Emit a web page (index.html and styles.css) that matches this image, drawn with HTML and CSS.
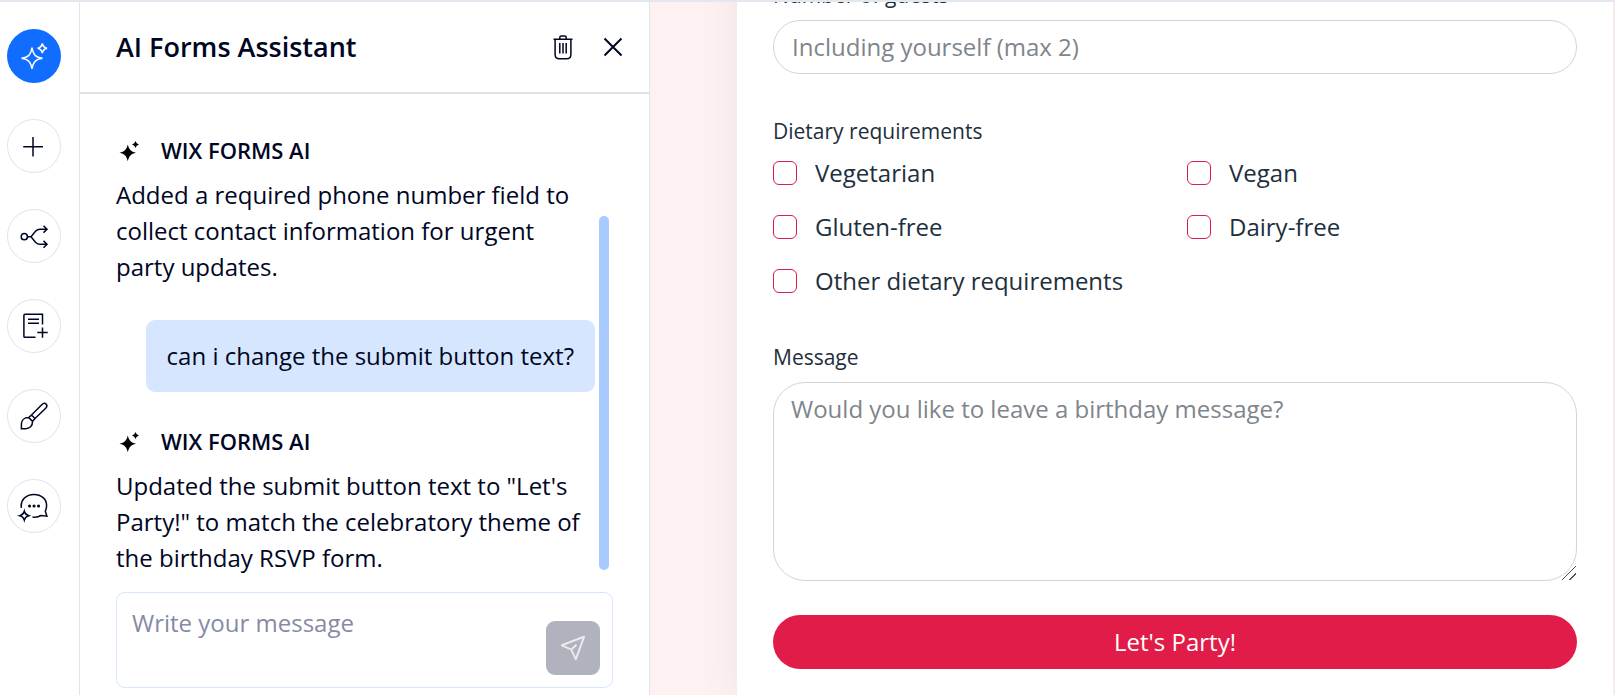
FILE: index.html
```html
<!DOCTYPE html>
<html lang="en">
    <head>
        <meta charset="UTF-8">
        <meta name="viewport" content="width=device-width, initial-scale=1.0"/>
        <title>AI Forms Assistant</title>
        <link rel="stylesheet" href="styles.css">
    </head>
    <body>
        <div class="editor">
            <nav class="rail" aria-label="Form tools">
                <button class="rail-button active" type="button" aria-label="AI assistant">
                    <svg viewBox="0 0 54 54">
                        <path d="M25 18.5C26 25.5 28.500 28.300 35.500 29.300C28.500 30.300 26 33 25 40C24 33 21.500 30.300 14.500 29.300C21.500 28.300 24 25.500 25 18.500Z"/>
                        <path d="M35.300 14.500C35.900 17.400 37.200 18.700 40 19.300C37.200 19.900 35.900 21.200 35.300 24C34.700 21.200 33.400 19.900 30.600 19.300C33.400 18.700 34.700 17.400 35.300 14.500Z"/>
                    </svg>
                </button>
                <button class="rail-button" type="button" aria-label="Add field">
                    <svg viewBox="0 0 54 54"><path d="M26 18V37.500M16.200 27.700H36"/></svg>
                </button>
                <button class="rail-button" type="button" aria-label="Rules">
                    <svg viewBox="0 0 54 54">
                        <circle cx="17.300" cy="27.700" r="3.100"/>
                        <path d="M20.500 27.700H24L28.500 22.300Q30.500 20.200 33 20.200H39.500M24 27.700L28.500 33.200Q30.500 35.300 33 35.300H39.500M36.500 16.800L40 20.200L36.500 23.600M36.500 31.900L40 35.300L36.500 38.700"/>
                    </svg>
                </button>
                <button class="rail-button" type="button" aria-label="Form pages">
                    <svg viewBox="0 0 54 54">
                        <path d="M35.500 25.500V15.300H18Q16.900 15.300 16.900 16.400V37.200Q16.900 38.300 18 38.300H28.500M21 20.300H32M21 24.300H32M35.500 28.500V38.700M30.300 33.500H40.700"/>
                    </svg>
                </button>
                <button class="rail-button" type="button" aria-label="Design">
                    <svg viewBox="0 0 54 54">
                        <path d="M24.500 26L35 15.500C36.500 14 38.200 14.100 39.100 15.100C40.200 16.200 40.100 17.800 38.700 19.200L28 29.500M24.500 26L28 29.500L25.500 32.300L21.700 28.600ZM21.700 28.600C17 28.500 14.500 31.500 14.400 35V39.700H18.500C22.500 39.700 25.800 37 25.500 32.300"/>
                    </svg>
                </button>
                <button class="rail-button" type="button" aria-label="Feedback">
                    <svg viewBox="0 0 54 54">
                        <path d="M14.300 28.800C13.300 20.500 19.300 15.400 27 15.400C34.500 15.400 39.600 20.300 39.600 26.500C39.600 29 38.800 31 38.300 32.200L39.900 37.200L34 36.500C31 38.300 28.300 38.500 25.500 38"/>
                        <path d="M17.300 32.300C18 35 19 36 21.700 36.700C19 37.400 18 38.400 17.300 41.100C16.600 38.400 15.600 37.400 12.900 36.700C15.600 36 16.600 35 17.300 32.300Z"/>
                        <path class="dots" d="M22.500 27H22.600M27 27H27.100M31.500 27H31.600"/>
                    </svg>
                </button>
            </nav>

            <section class="assistant">
                <header class="assistant-header">
                    <h1>AI Forms Assistant</h1>
                    <button class="icon-button" type="button" aria-label="Clear conversation">
                        <svg viewBox="0 0 24 30">
                            <path d="M2.500 7.200H21.500M8.800 7V5.500Q8.800 4 10.300 4H13.700Q15.200 4 15.200 5.500V7M4.100 7.500V22.500Q4.100 26.800 8.400 26.800H15.600Q19.900 26.800 19.900 22.500V7.500M8.800 11V21.500M12 11V21.500M15.200 11V21.500"/>
                        </svg>
                    </button>
                    <button class="icon-button close" type="button" aria-label="Close">
                        <svg viewBox="0 0 24 30"><path d="M3.500 6.500L20.500 23.500M20.500 6.500L3.500 23.500"/></svg>
                    </button>
                </header>

                <div class="chat">
                    <article class="reply">
                        <h2 class="reply-name">
                            <svg class="sparkle" viewBox="0 0 24 24">
                                <path d="M11.800 5.500C13 10.500 15 12.600 20 13.800C15 15 13 17.100 11.800 22.300C10.600 17.100 8.600 15 3.500 13.800C8.600 12.600 10.600 10.500 11.800 5.500ZM19.500 2L20.700 4.300L23 5.500L20.700 6.700L19.500 9L18.300 6.700L16 5.500L18.300 4.300Z"/>
                            </svg>
                            WIX FORMS AI
                        </h2>
                        <p>Added a required phone number field to collect contact information for urgent party updates.</p>
                    </article>
                    <p class="bubble">can i change the submit button text?</p>
                    <article class="reply">
                        <h2 class="reply-name">
                            <svg class="sparkle" viewBox="0 0 24 24">
                                <path d="M11.800 5.500C13 10.500 15 12.600 20 13.800C15 15 13 17.100 11.800 22.300C10.600 17.100 8.600 15 3.500 13.800C8.600 12.600 10.600 10.500 11.800 5.500ZM19.500 2L20.700 4.300L23 5.500L20.700 6.700L19.500 9L18.300 6.700L16 5.500L18.300 4.300Z"/>
                            </svg>
                            WIX FORMS AI
                        </h2>
                        <p>Updated the submit button text to "Let's Party!" to match the celebratory theme of the birthday RSVP form.</p>
                    </article>
                    <div class="scroll-thumb"></div>
                </div>

                <form class="composer">
                    <textarea aria-label="Write your message" placeholder="Write your message"></textarea>
                    <button class="send" type="submit" aria-label="Send">
                        <svg viewBox="0 0 54 54"><path d="M38 15.800L15.800 24.300L25.300 28.600L29.800 38.300ZM25.300 28.600L30.500 23.800"/></svg>
                    </button>
                </form>
            </section>

            <main class="preview">
                <form class="rsvp">
                    <div class="field">
                        <label for="guests">Number of guests</label>
                        <input class="control" id="guests" type="text" placeholder="Including yourself (max 2)">
                    </div>
                    <fieldset class="field">
                        <legend>Dietary requirements</legend>
                        <div class="choices">
                            <label class="choice"><input type="checkbox" name="diet">Vegetarian</label>
                            <label class="choice"><input type="checkbox" name="diet">Vegan</label>
                            <label class="choice"><input type="checkbox" name="diet">Gluten-free</label>
                            <label class="choice"><input type="checkbox" name="diet">Dairy-free</label>
                            <label class="choice"><input type="checkbox" name="diet">Other dietary requirements</label>
                        </div>
                    </fieldset>
                    <div class="field">
                        <label for="message">Message</label>
                        <textarea class="control" id="message" placeholder="Would you like to leave a birthday message?"></textarea>
                    </div>
                    <button class="submit" type="submit">Let's Party!</button>
                </form>
            </main>
        </div>
    </body>
</html>
```
FILE: styles.css
```css
*
{
    box-sizing: border-box;
}

body
{
    margin: 0;
    color: #000624;
    font-family: "Open Sans", "Noto Sans", sans-serif;
    font-size: 24px;
    line-height: 36px;
}

h1, h2, p
{
    margin: 0;
}

button, input, textarea
{
    margin: 0;
    font: inherit;
}

button
{
    padding: 0;
    border: none;
    background: none;
    color: inherit;
    cursor: pointer;
}

svg
{
    display: block;
    fill: none;
    stroke: currentColor;
    stroke-width: 1.5;
}

.editor
{
    display: flex;
    height: 100vh;
    overflow: hidden;
    border-top: 2px solid #e2e8ed;
}

/* left tool rail */
.rail
{
    display: flex;
    flex: none;
    flex-direction: column;
    gap: 36px;
    width: 80px;
    padding: 27px 0 0 7px;
    border-right: 1px solid #dfe5eb;
}

.rail-button
{
    width: 54px;
    height: 54px;
    border-radius: 50%;
    box-shadow: inset 0 0 0 1px #dfe5eb;
}

.rail-button.active
{
    background: #116dff;
    box-shadow: none;
    color: #fff;
}

.dots
{
    stroke-width: 3;
    stroke-linecap: round;
}

/* assistant panel */
.assistant
{
    display: flex;
    flex: none;
    flex-direction: column;
    width: 570px;
    border-right: 1px solid #dfe5eb;
}

.assistant-header
{
    display: flex;
    flex: none;
    align-items: center;
    gap: 26px;
    height: 92px;
    padding: 0 24px 0 36px;
    border-bottom: 2px solid #dfe5eb;
}

.assistant-header h1
{
    flex: 1;
    font-size: 27px;
    font-weight: 600;
}

.icon-button
{
    width: 24px;
    height: 30px;
}

.close svg
{
    stroke-width: 2;
}

.chat
{
    position: relative;
    display: flex;
    flex: 1;
    flex-direction: column;
    gap: 35px;
    min-height: 0;
    padding: 42px 54px 0 36px;
    overflow: hidden;
}

.reply
{
    display: flex;
    flex-direction: column;
    gap: 12px;
}

.reply-name
{
    display: flex;
    align-items: center;
    gap: 21px;
    font-size: 22px;
    font-weight: 600;
    line-height: 29px;
}

.sparkle
{
    width: 24px;
    height: 24px;
    fill: #000;
    stroke: none;
}

.bubble
{
    align-self: flex-end;
    padding: 18px 21px;
    border-radius: 9px;
    background: #d6e6fe;
}

.scroll-thumb
{
    position: absolute;
    right: 40px;
    bottom: 16px;
    width: 10px;
    height: 354px;
    border-radius: 5px;
    background: #a8caff;
}

.composer
{
    display: flex;
    flex: none;
    align-items: flex-end;
    height: 96px;
    margin: 6px 36px 7px;
    padding: 0 12px 12px 15px;
    border: 1px solid #d6e6fe;
    border-radius: 9px;
}

.composer textarea
{
    flex: 1;
    align-self: stretch;
    min-width: 0;
    padding: 12px 0 0;
    border: none;
    outline: none;
    background: none;
    resize: none;
}

.composer textarea::placeholder
{
    color: #868aa5;
}

.send
{
    width: 54px;
    height: 54px;
    border-radius: 9px;
    background: #b0b3be;
    color: #e9eaed;
}

.send svg
{
    stroke-width: 2;
    stroke-linejoin: round;
}

/* form preview */
.preview
{
    flex: 1;
    min-width: 0;
    padding: 0 2px 0 87px;
    overflow: hidden;
    background: #fef1f1;
}

.rsvp
{
    margin-top: -57px;
    padding: 36px;
    background: #fff;
    box-shadow: 0 0 40px rgba(0, 0, 0, 0.06);
    color: #212f3d;
    font-family: "Open Sans", sans-serif;
}

.field
{
    display: flex;
    flex-direction: column;
    gap: 11px;
    min-width: 0;
    margin: 0 0 43px;
    padding: 0;
    border: none;
    font-size: 21px;
    line-height: 28px;
}

legend
{
    padding: 0;
    margin-bottom: 9px;
}

.control
{
    display: block;
    width: 100%;
    border: 1px solid #d3d5d8;
    outline: none;
    background: #fff;
    color: inherit;
    font-size: 24px;
    line-height: 36px;
}

.control::placeholder
{
    color: #7f858c;
}

input.control
{
    height: 54px;
    padding: 0 18px 2px;
    border-radius: 27px;
}

textarea.control
{
    height: 199px;
    padding: 8px 17px;
    border-radius: 32px;
    resize: vertical;
}

textarea.control::-webkit-resizer
{
    background: linear-gradient(135deg, transparent 11px, #555 11px, #555 12px, transparent 12px, transparent 16px, #555 16px, #555 17px, transparent 17px);
}

.choices
{
    display: grid;
    grid-template-columns: 1fr 1fr;
    gap: 16px 24px;
}

.choice
{
    display: flex;
    align-items: center;
    gap: 18px;
    height: 38px;
    font-size: 24px;
}

.choice input
{
    appearance: none;
    width: 24px;
    height: 24px;
    border: 1px solid #e21c48;
    border-radius: 6px;
}

.submit
{
    display: block;
    width: 100%;
    height: 54px;
    margin-top: -9px;
    border-radius: 27px;
    background: #e21c48;
    color: #fff;
}
```
